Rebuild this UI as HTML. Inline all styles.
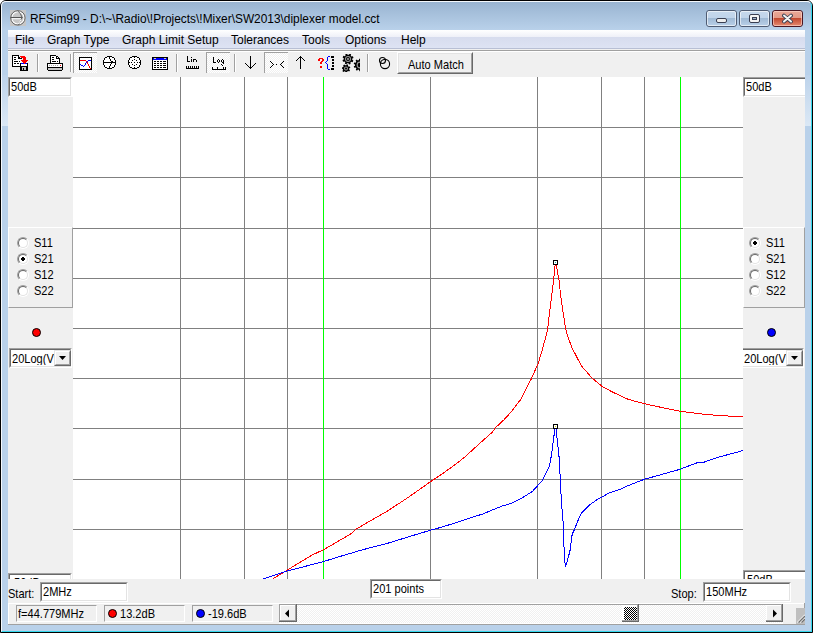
<!DOCTYPE html>
<html><head><meta charset="utf-8">
<style>
*{margin:0;padding:0;box-sizing:border-box}
html,body{width:813px;height:633px;overflow:hidden;background:#fff;font-family:"Liberation Sans",sans-serif;font-size:12px;color:#000}
.a{position:absolute}
.t{position:absolute;white-space:nowrap;line-height:1}
.ms{font-size:13px;transform:scaleX(0.85);transform-origin:0 0}
.sunk{position:absolute;background:#fff;border-top:1px solid #a0a0a0;border-left:1px solid #a0a0a0;border-right:1px solid #fff;border-bottom:1px solid #fff}
.sunk>i{position:absolute;left:0;top:0;right:0;bottom:0;border-top:1px solid #696969;border-left:1px solid #696969;border-right:1px solid #e3e3e3;border-bottom:1px solid #e3e3e3}
</style></head><body>
<!-- frame -->
<div class="a" style="left:0;top:0;width:813px;height:633px;border:1px solid #000;border-radius:6px 6px 0 0;background:#b9d1ea"></div>
<div class="a" style="left:1px;top:1px;width:811px;height:631px;border-top:1px solid #f4f8fc;border-left:1px solid #f4f8fc;border-right:1px solid #35d8ee;border-bottom:1px solid #35d8ee;border-radius:5px 5px 0 0;background:linear-gradient(#99b4d1 0px,#b9d1ea 28px,#b9d1ea 100%)"></div>
<!-- title icon -->
<svg class="a" style="left:10px;top:10px" width="16" height="16" viewBox="10 10 16 16">
<rect x="10" y="10" width="16" height="16" fill="#c6c6c6"/>
<circle cx="17.9" cy="17.9" r="6.2" fill="none" stroke="#fff" stroke-width="1.2"/>
<circle cx="17.9" cy="17.9" r="7.2" fill="none" stroke="#646464" stroke-width="1"/>
<rect x="10.5" y="17" width="12" height="1.1" fill="#555"/>
<rect x="12" y="18.2" width="9" height="1" fill="#fff"/>
<path d="M17.5 10.8 Q21 13 22 17.5" fill="none" stroke="#646464" stroke-width="1"/>
<path d="M22 17.5 Q20 22 18 25" fill="none" stroke="#646464" stroke-width="1"/>
<path d="M21 19.5 Q19.5 22.5 18.3 24" fill="none" stroke="#fff" stroke-width="1"/>
</svg>
<div class="t" style="left:30px;top:13px;font-size:12px;color:#000;transform:scaleX(0.99);transform-origin:0 0">RFSim99 - D:\~\Radio\!Projects\!Mixer\SW2013\diplexer model.cct</div>
<!-- caption buttons -->
<div class="a" style="left:706px;top:10px;width:31px;height:17px;border:1px solid #4f5c73;border-radius:3px;background:linear-gradient(#c6d8ec 0,#c0d4ea 7px,#9fb9d4 7px,#b9d0e8 15px)"><div class="a" style="left:0;top:0;right:0;bottom:0;border:1px solid rgba(255,255,255,.6);border-radius:2px"></div></div>
<div class="a" style="left:716px;top:18px;width:11px;height:5px;border:1px solid #3a3f52;border-radius:2px;background:#eee"></div>
<div class="a" style="left:739px;top:10px;width:31px;height:17px;border:1px solid #4f5c73;border-radius:3px;background:linear-gradient(#c6d8ec 0,#c0d4ea 7px,#9fb9d4 7px,#b9d0e8 15px)"><div class="a" style="left:0;top:0;right:0;bottom:0;border:1px solid rgba(255,255,255,.6);border-radius:2px"></div></div>
<div class="a" style="left:749px;top:14px;width:11px;height:9px;border:1px solid #3a3f52;border-radius:2px;background:#f4f4f4"></div>
<div class="a" style="left:752px;top:17px;width:5px;height:3px;border:1px solid #3a3f52;background:#9fb5cc"></div>
<div class="a" style="left:772px;top:10px;width:31px;height:17px;border:1px solid #4a1622;border-radius:3px;background:linear-gradient(#eaa898 0,#e39a88 7px,#c0452c 7px,#e58a70 15px)"><div class="a" style="left:0;top:0;right:0;bottom:0;border:1px solid rgba(255,220,210,.6);border-radius:2px"></div></div>
<svg class="a" style="left:781px;top:13px" width="13" height="11" viewBox="0 0 13 11"><path d="M3 2.6 L10 8.6 M10 2.6 L3 8.6" stroke="#3a3f52" stroke-width="3.8" stroke-linecap="round"/><path d="M3 2.6 L10 8.6 M10 2.6 L3 8.6" stroke="#f4f4f4" stroke-width="2" stroke-linecap="round"/></svg>

<!-- client area -->
<div class="a" style="left:8px;top:30px;width:797px;height:595px;background:#f0f0f0"></div>
<!-- menu -->
<div class="a" style="left:8px;top:30px;width:797px;height:18px;background:linear-gradient(#fff 0,#eef0f8 7px,#d7dcee 7px,#dde3f3 18px)"></div>
<div class="a" style="left:8px;top:48px;width:797px;height:1px;background:#b8bfd4"></div>
<div class="a" style="left:8px;top:49px;width:797px;height:1px;background:#f0f0f0"></div>
<div class="a" style="left:8px;top:50px;width:797px;height:1px;background:#a0a0a0"></div>
<div class="a" style="left:8px;top:51px;width:797px;height:1px;background:#fff"></div>
<div class="t" style="left:15px;top:34px">File</div>
<div class="t" style="left:47px;top:34px">Graph Type</div>
<div class="t" style="left:122px;top:34px">Graph Limit Setup</div>
<div class="t" style="left:231px;top:34px">Tolerances</div>
<div class="t" style="left:302px;top:34px">Tools</div>
<div class="t" style="left:345px;top:34px">Options</div>
<div class="t" style="left:401px;top:34px">Help</div>

<!-- toolbar -->
<div class="a" style="left:37px;top:54px;width:1px;height:18px;background:#a0a0a0"></div><div class="a" style="left:38px;top:54px;width:1px;height:18px;background:#fff"></div>
<div class="a" style="left:70px;top:54px;width:1px;height:18px;background:#a0a0a0"></div><div class="a" style="left:71px;top:54px;width:1px;height:18px;background:#fff"></div>
<div class="a" style="left:176px;top:54px;width:1px;height:18px;background:#a0a0a0"></div><div class="a" style="left:177px;top:54px;width:1px;height:18px;background:#fff"></div>
<div class="a" style="left:234px;top:54px;width:1px;height:18px;background:#a0a0a0"></div><div class="a" style="left:235px;top:54px;width:1px;height:18px;background:#fff"></div>
<div class="a" style="left:367px;top:54px;width:1px;height:18px;background:#a0a0a0"></div><div class="a" style="left:368px;top:54px;width:1px;height:18px;background:#fff"></div>
<svg class="a" style="left:0;top:0" width="813" height="80">
<defs><pattern id="dith" width="2" height="2" patternUnits="userSpaceOnUse"><rect width="2" height="2" fill="#f0f0f0"/><rect width="1" height="1" fill="#fff"/><rect x="1" y="1" width="1" height="1" fill="#fff"/></pattern></defs>
<g shape-rendering="crispEdges">
<!-- pressed buttons -->
<rect x="73" y="52" width="24" height="21" fill="url(#dith)"/><rect x="73" y="52" width="24" height="1" fill="#a0a0a0"/><rect x="73" y="52" width="1" height="21" fill="#a0a0a0"/>
<rect x="206" y="52" width="24" height="21" fill="url(#dith)"/><rect x="206" y="52" width="24" height="1" fill="#a0a0a0"/><rect x="206" y="52" width="1" height="21" fill="#a0a0a0"/>
<rect x="264" y="52" width="24" height="21" fill="url(#dith)"/><rect x="264" y="52" width="24" height="1" fill="#a0a0a0"/><rect x="264" y="52" width="1" height="21" fill="#a0a0a0"/>
<!-- save icon -->
<rect x="12" y="55" width="7" height="1" fill="#000"/><rect x="12" y="55" width="1" height="12" fill="#000"/><rect x="12" y="66" width="9" height="1" fill="#000"/><rect x="13" y="56" width="8" height="10" fill="#fff"/><rect x="19" y="56" width="2" height="2" fill="#f0f0f0"/><rect x="18" y="56" width="1" height="1" fill="#000"/><rect x="19" y="57" width="1" height="1" fill="#000"/><rect x="20" y="58" width="1" height="1" fill="#000"/><rect x="18" y="57" width="1" height="2" fill="#000"/><rect x="18" y="58" width="2" height="1" fill="#000"/><rect x="14" y="57" width="2" height="1" fill="#000"/><rect x="14" y="59" width="2" height="1" fill="#000"/><rect x="14" y="61" width="4" height="1" fill="#000"/><rect x="19" y="61" width="1" height="1" fill="#000"/><rect x="14" y="63" width="2" height="1" fill="#000"/><rect x="17" y="63" width="2" height="1" fill="#000"/><rect x="21" y="58" width="1" height="1" fill="#000"/><rect x="20" y="56" width="5" height="1" fill="#f00"/><rect x="21" y="57" width="5" height="1" fill="#f00"/><rect x="23" y="58" width="3" height="1" fill="#f00"/><rect x="23" y="59" width="3" height="1" fill="#f00"/><rect x="21" y="60" width="7" height="1" fill="#f00"/><rect x="22" y="61" width="5" height="1" fill="#f00"/><rect x="23" y="62" width="3" height="1" fill="#f00"/><rect x="24" y="63" width="1" height="1" fill="#f00"/><rect x="20" y="63" width="8" height="8" fill="#000"/><rect x="21" y="63" width="3" height="1" fill="#00f"/><rect x="25" y="63" width="2" height="1" fill="#00f"/><rect x="24" y="63" width="1" height="1" fill="#f00"/><rect x="21" y="64" width="6" height="2" fill="#fff"/><rect x="22" y="67" width="4" height="3" fill="#c0c0c0"/><rect x="23" y="68" width="1" height="2" fill="#000"/><rect x="27" y="70" width="1" height="1" fill="#000"/>
<!-- printer -->
<rect x="50" y="55" width="10" height="9" fill="#000"/><rect x="51" y="56" width="8" height="8" fill="#fff"/>
<rect x="56" y="55" width="4" height="3" fill="#f0f0f0"/><rect x="56" y="56" width="1" height="2" fill="#000"/><rect x="56" y="58" width="3" height="1" fill="#000"/><rect x="57" y="56" width="1" height="1" fill="#000"/><rect x="58" y="57" width="1" height="1" fill="#000"/><rect x="59" y="58" width="1" height="6" fill="#000"/>
<rect x="52" y="57" width="2" height="1" fill="#000"/><rect x="52" y="59" width="2" height="1" fill="#000"/><rect x="52" y="61" width="4" height="1" fill="#000"/><rect x="57" y="61" width="1" height="1" fill="#000"/>
<rect x="47" y="63" width="16" height="8" fill="#000"/><rect x="48" y="64" width="14" height="3" fill="#fff"/>
<rect x="49" y="65" width="1" height="1" fill="#aaa"/><rect x="51" y="65" width="1" height="1" fill="#aaa"/><rect x="53" y="65" width="1" height="1" fill="#aaa"/><rect x="55" y="65" width="1" height="1" fill="#aaa"/><rect x="57" y="65" width="1" height="1" fill="#aaa"/><rect x="60" y="65" width="1" height="1" fill="#f00"/>
<rect x="48" y="68" width="14" height="2" fill="#c8c8c8"/><rect x="47" y="70" width="1" height="1" fill="#f0f0f0"/><rect x="62" y="70" width="1" height="1" fill="#f0f0f0"/>
<!-- graph icon -->
<rect x="79" y="57" width="13" height="13" fill="#000"/><rect x="80" y="58" width="11" height="11" fill="#fff"/>
</g>
<g shape-rendering="crispEdges"><rect x="80" y="60" width="1" height="1" fill="#f00"/><rect x="81" y="60" width="1" height="1" fill="#f00"/><rect x="82" y="60" width="1" height="1" fill="#f00"/><rect x="83" y="60" width="1" height="1" fill="#f00"/><rect x="84" y="60" width="1" height="1" fill="#f00"/><rect x="85" y="60" width="1" height="1" fill="#f00"/><rect x="86" y="61" width="1" height="1" fill="#f00"/><rect x="87" y="62" width="1" height="1" fill="#f00"/><rect x="87" y="63" width="1" height="1" fill="#f00"/><rect x="88" y="64" width="1" height="1" fill="#f00"/><rect x="88" y="65" width="1" height="1" fill="#f00"/><rect x="89" y="66" width="1" height="1" fill="#f00"/><rect x="89" y="67" width="1" height="1" fill="#f00"/><rect x="90" y="68" width="1" height="1" fill="#f00"/><rect x="80" y="64" width="1" height="1" fill="#00f"/><rect x="81" y="65" width="1" height="1" fill="#00f"/><rect x="82" y="65" width="1" height="1" fill="#00f"/><rect x="83" y="66" width="1" height="1" fill="#00f"/><rect x="84" y="65" width="1" height="1" fill="#00f"/><rect x="85" y="64" width="1" height="1" fill="#00f"/><rect x="85" y="63" width="1" height="1" fill="#00f"/><rect x="86" y="62" width="1" height="1" fill="#00f"/><rect x="87" y="61" width="1" height="1" fill="#00f"/><rect x="88" y="60" width="1" height="1" fill="#00f"/><rect x="89" y="60" width="1" height="1" fill="#00f"/><rect x="90" y="60" width="1" height="1" fill="#00f"/></g>
<!-- smith -->
<g shape-rendering="crispEdges"><rect x="107" y="57" width="5" height="1" fill="#fff"/><rect x="105" y="58" width="9" height="1" fill="#fff"/><rect x="105" y="59" width="9" height="1" fill="#fff"/><rect x="104" y="60" width="11" height="1" fill="#fff"/><rect x="104" y="61" width="11" height="1" fill="#fff"/><rect x="104" y="62" width="11" height="1" fill="#fff"/><rect x="104" y="63" width="11" height="1" fill="#fff"/><rect x="104" y="64" width="11" height="1" fill="#fff"/><rect x="105" y="65" width="9" height="1" fill="#fff"/><rect x="105" y="66" width="9" height="1" fill="#fff"/><rect x="107" y="67" width="5" height="1" fill="#fff"/><rect x="107" y="56" width="5" height="1" fill="#000"/><rect x="105" y="57" width="2" height="1" fill="#000"/><rect x="112" y="57" width="2" height="1" fill="#000"/><rect x="104" y="58" width="1" height="1" fill="#000"/><rect x="114" y="58" width="1" height="1" fill="#000"/><rect x="104" y="59" width="1" height="1" fill="#000"/><rect x="114" y="59" width="1" height="1" fill="#000"/><rect x="103" y="60" width="1" height="1" fill="#000"/><rect x="115" y="60" width="1" height="1" fill="#000"/><rect x="103" y="61" width="1" height="1" fill="#000"/><rect x="115" y="61" width="1" height="1" fill="#000"/><rect x="103" y="62" width="1" height="1" fill="#000"/><rect x="115" y="62" width="1" height="1" fill="#000"/><rect x="103" y="63" width="1" height="1" fill="#000"/><rect x="115" y="63" width="1" height="1" fill="#000"/><rect x="103" y="64" width="1" height="1" fill="#000"/><rect x="115" y="64" width="1" height="1" fill="#000"/><rect x="104" y="65" width="1" height="1" fill="#000"/><rect x="114" y="65" width="1" height="1" fill="#000"/><rect x="104" y="66" width="1" height="1" fill="#000"/><rect x="114" y="66" width="1" height="1" fill="#000"/><rect x="105" y="67" width="2" height="1" fill="#000"/><rect x="112" y="67" width="2" height="1" fill="#000"/><rect x="107" y="68" width="5" height="1" fill="#000"/><rect x="104" y="62" width="11" height="1" fill="#000"/><rect x="109" y="57" width="1" height="1" fill="#000"/><rect x="109" y="58" width="1" height="1" fill="#000"/><rect x="110" y="59" width="1" height="1" fill="#000"/><rect x="110" y="60" width="1" height="1" fill="#000"/><rect x="111" y="61" width="1" height="1" fill="#000"/><rect x="111" y="63" width="1" height="1" fill="#000"/><rect x="110" y="64" width="1" height="1" fill="#000"/><rect x="110" y="65" width="1" height="1" fill="#000"/><rect x="109" y="66" width="1" height="1" fill="#000"/><rect x="109" y="67" width="1" height="1" fill="#000"/><rect x="111" y="61" width="2" height="2" fill="#000"/></g>
<!-- polar -->
<g shape-rendering="crispEdges" fill="#000"><rect x="132" y="57" width="5" height="1" fill="#fff"/><rect x="130" y="58" width="9" height="1" fill="#fff"/><rect x="130" y="59" width="9" height="1" fill="#fff"/><rect x="129" y="60" width="11" height="1" fill="#fff"/><rect x="129" y="61" width="11" height="1" fill="#fff"/><rect x="129" y="62" width="11" height="1" fill="#fff"/><rect x="129" y="63" width="11" height="1" fill="#fff"/><rect x="129" y="64" width="11" height="1" fill="#fff"/><rect x="130" y="65" width="9" height="1" fill="#fff"/><rect x="130" y="66" width="9" height="1" fill="#fff"/><rect x="132" y="67" width="5" height="1" fill="#fff"/><rect x="132" y="56" width="5" height="1" fill="#000"/><rect x="130" y="57" width="2" height="1" fill="#000"/><rect x="137" y="57" width="2" height="1" fill="#000"/><rect x="129" y="58" width="1" height="1" fill="#000"/><rect x="139" y="58" width="1" height="1" fill="#000"/><rect x="129" y="59" width="1" height="1" fill="#000"/><rect x="139" y="59" width="1" height="1" fill="#000"/><rect x="128" y="60" width="1" height="1" fill="#000"/><rect x="140" y="60" width="1" height="1" fill="#000"/><rect x="128" y="61" width="1" height="1" fill="#000"/><rect x="140" y="61" width="1" height="1" fill="#000"/><rect x="128" y="62" width="1" height="1" fill="#000"/><rect x="140" y="62" width="1" height="1" fill="#000"/><rect x="128" y="63" width="1" height="1" fill="#000"/><rect x="140" y="63" width="1" height="1" fill="#000"/><rect x="128" y="64" width="1" height="1" fill="#000"/><rect x="140" y="64" width="1" height="1" fill="#000"/><rect x="129" y="65" width="1" height="1" fill="#000"/><rect x="139" y="65" width="1" height="1" fill="#000"/><rect x="129" y="66" width="1" height="1" fill="#000"/><rect x="139" y="66" width="1" height="1" fill="#000"/><rect x="130" y="67" width="2" height="1" fill="#000"/><rect x="137" y="67" width="2" height="1" fill="#000"/><rect x="132" y="68" width="5" height="1" fill="#000"/><rect x="134" y="57" width="1" height="1" fill="#000"/><rect x="134" y="67" width="1" height="1" fill="#000"/><rect x="129" y="62" width="1" height="1" fill="#000"/><rect x="139" y="62" width="1" height="1" fill="#000"/><rect x="134" y="59" width="1" height="1" fill="#000"/><rect x="132" y="60" width="1" height="1" fill="#000"/><rect x="136" y="60" width="1" height="1" fill="#000"/><rect x="131" y="62" width="1" height="1" fill="#000"/><rect x="134" y="62" width="1" height="1" fill="#000"/><rect x="137" y="62" width="1" height="1" fill="#000"/><rect x="132" y="64" width="1" height="1" fill="#000"/><rect x="136" y="64" width="1" height="1" fill="#000"/><rect x="134" y="65" width="1" height="1" fill="#000"/>
<!-- table -->
<rect x="152" y="57" width="16" height="13"/><rect x="153" y="58" width="14" height="11" fill="#fff"/><rect x="153" y="58" width="14" height="2" fill="#00f"/><rect x="154" y="58" width="2" height="1" fill="#d8d8a0"/><rect x="164" y="58" width="2" height="1" fill="#d8d8a0"/>
<rect x="154" y="61" width="2" height="1"/><rect x="157" y="61" width="2" height="1"/><rect x="160" y="61" width="2" height="1"/><rect x="163" y="61" width="3" height="1"/>
<rect x="154" y="63" width="2" height="1"/><rect x="157" y="63" width="2" height="1"/><rect x="160" y="63" width="2" height="1"/><rect x="163" y="63" width="3" height="1"/>
<rect x="154" y="65" width="2" height="1"/><rect x="157" y="65" width="2" height="1"/><rect x="160" y="65" width="2" height="1"/><rect x="163" y="65" width="3" height="1"/>
<rect x="154" y="67" width="2" height="1"/><rect x="157" y="67" width="2" height="1"/><rect x="160" y="67" width="2" height="1"/><rect x="163" y="67" width="3" height="1"/>
<!-- Lin -->
<rect x="187" y="56" width="1" height="6"/><rect x="187" y="61" width="3" height="1"/><rect x="191" y="57" width="1" height="1"/><rect x="191" y="59" width="1" height="3"/><rect x="193" y="59" width="1" height="3"/><rect x="194" y="59" width="2" height="1"/><rect x="196" y="60" width="1" height="2"/>
<rect x="186" y="68" width="13" height="1"/><rect x="186" y="66" width="1" height="2"/><rect x="188" y="66" width="1" height="2"/><rect x="190" y="66" width="1" height="2"/><rect x="192" y="66" width="1" height="2"/><rect x="194" y="66" width="1" height="2"/><rect x="196" y="66" width="1" height="2"/><rect x="198" y="66" width="1" height="2"/>
<!-- Log -->
<rect x="213" y="57" width="1" height="6"/><rect x="213" y="62" width="3" height="1"/>
<rect x="218" y="59" width="1" height="1"/><rect x="217" y="60" width="1" height="2"/><rect x="219" y="60" width="1" height="2"/><rect x="218" y="62" width="1" height="1"/>
<rect x="222" y="59" width="1" height="1"/><rect x="221" y="60" width="1" height="2"/><rect x="223" y="60" width="1" height="4"/><rect x="222" y="62" width="1" height="1"/><rect x="221" y="64" width="1" height="1"/><rect x="222" y="65" width="1" height="1"/>
<rect x="212" y="69" width="14" height="1"/><rect x="212" y="67" width="1" height="2"/><rect x="217" y="67" width="1" height="2"/><rect x="223" y="67" width="1" height="2"/><rect x="225" y="67" width="1" height="2"/>
</g>
<!-- arrows -->
<g fill="none" stroke="#000" stroke-width="1" shape-rendering="crispEdges">
<path d="M250.5 56v12.5M245.5 63.5l5 5l5 -5"/>
<path d="M300.5 68.5v-12.5M295.5 61.5l5 -5l5 5"/>

</g>
<rect x="276" y="64" width="1" height="1" fill="#000"/>
<g fill="#000" shape-rendering="crispEdges"><rect x="270" y="61" width="1" height="1"/><rect x="271" y="62" width="1" height="1"/><rect x="272" y="63" width="1" height="1"/><rect x="273" y="64" width="1" height="1"/><rect x="272" y="65" width="1" height="1"/><rect x="271" y="66" width="1" height="1"/><rect x="270" y="67" width="1" height="1"/><rect x="283" y="61" width="1" height="1"/><rect x="282" y="62" width="1" height="1"/><rect x="281" y="63" width="1" height="1"/><rect x="280" y="64" width="1" height="1"/><rect x="281" y="65" width="1" height="1"/><rect x="282" y="66" width="1" height="1"/><rect x="283" y="67" width="1" height="1"/></g>

<!-- ?{ -->
<g shape-rendering="crispEdges">
<g fill="#f00"><rect x="319" y="58" width="4" height="1"/><rect x="318" y="59" width="2" height="2"/><rect x="322" y="59" width="2" height="2"/><rect x="321" y="61" width="2" height="1"/><rect x="320" y="62" width="2" height="2"/><rect x="320" y="66" width="2" height="2"/></g>
<g fill="#00f"><rect x="328" y="56" width="2" height="1"/><rect x="327" y="57" width="1" height="4"/><rect x="326" y="61" width="1" height="1"/><rect x="325" y="62" width="1" height="1"/><rect x="326" y="63" width="1" height="1"/><rect x="327" y="64" width="1" height="5"/><rect x="328" y="69" width="2" height="1"/></g>
<g fill="#000"><rect x="331" y="56" width="3" height="2"/><rect x="332" y="59" width="2" height="2"/><rect x="332" y="62" width="2" height="2"/><rect x="332" y="65" width="2" height="2"/><rect x="331" y="68" width="3" height="2"/></g>
</g>
<!-- gears -->
<clipPath id="gclip"><rect x="342" y="54" width="18" height="18"/></clipPath>
<g clip-path="url(#gclip)">
<path d="M352.21 59.85 L353.36 60.62 L352.64 62.13 L351.32 61.73 L350.38 62.58 L350.64 63.94 L349.07 64.50 L348.42 63.28 L347.15 63.21 L346.38 64.36 L344.87 63.64 L345.27 62.32 L344.42 61.38 L343.06 61.64 L342.50 60.07 L343.72 59.42 L343.79 58.15 L342.64 57.38 L343.36 55.87 L344.68 56.27 L345.62 55.42 L345.36 54.06 L346.93 53.50 L347.58 54.72 L348.85 54.79 L349.62 53.64 L351.13 54.36 L350.73 55.68 L351.58 56.62 L352.94 56.36 L353.50 57.93 L352.28 58.58Z" fill="#000"/><circle cx="348" cy="59" r="3" fill="#999"/><circle cx="348" cy="59" r="2" fill="#000"/><circle cx="348" cy="59" r="1" fill="#aaa"/>
<path d="M364.98 65.50 L366.30 66.12 L365.86 67.58 L364.41 67.35 L363.73 68.33 L364.44 69.61 L363.23 70.53 L362.19 69.50 L361.06 69.89 L360.89 71.34 L359.36 71.37 L359.13 69.92 L357.99 69.58 L356.99 70.65 L355.74 69.78 L356.40 68.47 L355.68 67.52 L354.25 67.80 L353.75 66.36 L355.05 65.69 L355.02 64.50 L353.70 63.88 L354.14 62.42 L355.59 62.65 L356.27 61.67 L355.56 60.39 L356.77 59.47 L357.81 60.50 L358.94 60.11 L359.11 58.66 L360.64 58.63 L360.87 60.08 L362.01 60.42 L363.01 59.35 L364.26 60.22 L363.60 61.53 L364.32 62.48 L365.75 62.20 L366.25 63.64 L364.95 64.31Z" fill="#000"/><circle cx="360" cy="65" r="3.4" fill="#999"/><circle cx="360" cy="65" r="2.3" fill="#000"/>
<path d="M349.15 69.48 L350.04 70.24 L349.22 71.50 L348.16 70.99 L347.20 71.57 L347.15 72.75 L345.67 72.89 L345.40 71.74 L344.35 71.36 L343.40 72.05 L342.36 70.98 L343.09 70.05 L342.74 68.99 L341.60 68.68 L341.80 67.20 L342.97 67.19 L343.58 66.25 L343.12 65.18 L344.40 64.40 L345.13 65.32 L346.25 65.21 L346.80 64.17 L348.20 64.69 L347.95 65.84 L348.73 66.64 L349.88 66.43 L350.35 67.85 L349.30 68.36Z" fill="#000"/><circle cx="346" cy="68.5" r="2" fill="#999"/><circle cx="346" cy="68.5" r="1" fill="#000"/>
</g>
<!-- circle icon -->
<circle cx="382.5" cy="60.5" r="3" fill="none" stroke="#000" stroke-width="1.1"/>
<circle cx="385" cy="64" r="4.6" fill="none" stroke="#000" stroke-width="1.1"/>
</svg>
<!-- Auto Match button -->
<div class="a" style="left:397px;top:52px;width:76px;height:22px;background:#f0f0f0;border-top:1px solid #fff;border-left:1px solid #fff;border-right:1px solid #696969;border-bottom:1px solid #696969"><div class="a" style="left:0;top:0;right:0;bottom:0;border-right:1px solid #a0a0a0;border-bottom:1px solid #a0a0a0;border-top:1px solid #e3e3e3;border-left:1px solid #e3e3e3"></div></div>
<div class="t ms" style="left:408px;top:58px">Auto Match</div>


<div class="a" style="left:8px;top:77px;width:65px;height:502px;background:#f0f0f0"></div>
<div class="a" style="left:8px;top:227px;width:65px;height:81px;border-top:1px solid #fff;border-left:1px solid #fff;border-right:1px solid #a0a0a0;border-bottom:1px solid #a0a0a0"></div>
<div class="a" style="left:17px;top:237px;width:12px;height:12px;border-radius:50%;border:1px solid;border-color:#a0a0a0 #fff #fff #a0a0a0;transform:rotate(0deg)"><div class="a" style="left:0;top:0;width:10px;height:10px;border-radius:50%;border:1px solid;border-color:#696969 #e3e3e3 #e3e3e3 #696969;background:#fff"></div></div>
<div class="t ms" style="left:34px;top:236px">S11</div>
<div class="a" style="left:17px;top:253px;width:12px;height:12px;border-radius:50%;border:1px solid;border-color:#a0a0a0 #fff #fff #a0a0a0;transform:rotate(0deg)"><div class="a" style="left:0;top:0;width:10px;height:10px;border-radius:50%;border:1px solid;border-color:#696969 #e3e3e3 #e3e3e3 #696969;background:#fff"></div></div><div class="a" style="left:21px;top:258px;width:4px;height:2px;background:#000"></div><div class="a" style="left:22px;top:257px;width:2px;height:4px;background:#000"></div>
<div class="t ms" style="left:34px;top:252px">S21</div>
<div class="a" style="left:17px;top:269px;width:12px;height:12px;border-radius:50%;border:1px solid;border-color:#a0a0a0 #fff #fff #a0a0a0;transform:rotate(0deg)"><div class="a" style="left:0;top:0;width:10px;height:10px;border-radius:50%;border:1px solid;border-color:#696969 #e3e3e3 #e3e3e3 #696969;background:#fff"></div></div>
<div class="t ms" style="left:34px;top:268px">S12</div>
<div class="a" style="left:17px;top:285px;width:12px;height:12px;border-radius:50%;border:1px solid;border-color:#a0a0a0 #fff #fff #a0a0a0;transform:rotate(0deg)"><div class="a" style="left:0;top:0;width:10px;height:10px;border-radius:50%;border:1px solid;border-color:#696969 #e3e3e3 #e3e3e3 #696969;background:#fff"></div></div>
<div class="t ms" style="left:34px;top:284px">S22</div>
<div class="a" style="left:32px;top:328px;width:9px;height:9px;border-radius:50%;background:#f00;border:1px solid #000"></div>
<div class="a" style="left:743px;top:77px;width:62px;height:502px;background:#f0f0f0"></div>
<div class="a" style="left:743px;top:227px;width:62px;height:81px;border-top:1px solid #fff;border-left:1px solid #fff;border-right:1px solid #a0a0a0;border-bottom:1px solid #a0a0a0"></div>
<div class="a" style="left:749px;top:237px;width:12px;height:12px;border-radius:50%;border:1px solid;border-color:#a0a0a0 #fff #fff #a0a0a0;transform:rotate(0deg)"><div class="a" style="left:0;top:0;width:10px;height:10px;border-radius:50%;border:1px solid;border-color:#696969 #e3e3e3 #e3e3e3 #696969;background:#fff"></div></div><div class="a" style="left:753px;top:242px;width:4px;height:2px;background:#000"></div><div class="a" style="left:754px;top:241px;width:2px;height:4px;background:#000"></div>
<div class="t ms" style="left:766px;top:236px">S11</div>
<div class="a" style="left:749px;top:253px;width:12px;height:12px;border-radius:50%;border:1px solid;border-color:#a0a0a0 #fff #fff #a0a0a0;transform:rotate(0deg)"><div class="a" style="left:0;top:0;width:10px;height:10px;border-radius:50%;border:1px solid;border-color:#696969 #e3e3e3 #e3e3e3 #696969;background:#fff"></div></div>
<div class="t ms" style="left:766px;top:252px">S21</div>
<div class="a" style="left:749px;top:269px;width:12px;height:12px;border-radius:50%;border:1px solid;border-color:#a0a0a0 #fff #fff #a0a0a0;transform:rotate(0deg)"><div class="a" style="left:0;top:0;width:10px;height:10px;border-radius:50%;border:1px solid;border-color:#696969 #e3e3e3 #e3e3e3 #696969;background:#fff"></div></div>
<div class="t ms" style="left:766px;top:268px">S12</div>
<div class="a" style="left:749px;top:285px;width:12px;height:12px;border-radius:50%;border:1px solid;border-color:#a0a0a0 #fff #fff #a0a0a0;transform:rotate(0deg)"><div class="a" style="left:0;top:0;width:10px;height:10px;border-radius:50%;border:1px solid;border-color:#696969 #e3e3e3 #e3e3e3 #696969;background:#fff"></div></div>
<div class="t ms" style="left:766px;top:284px">S22</div>
<div class="a" style="left:767px;top:328px;width:9px;height:9px;border-radius:50%;background:#00f;border:1px solid #000"></div>
<div class="sunk" style="left:8px;top:77px;width:64px;height:20px"><i></i></div><div class="t ms" style="left:11px;top:80px">50dB</div>
<div class="sunk" style="left:743px;top:77px;width:64px;height:20px"><i></i></div><div class="t ms" style="left:746px;top:80px">50dB</div>
<div class="a" style="left:8px;top:573px;width:64px;height:6px;overflow:hidden"><div class="sunk" style="left:0;top:0;width:64px;height:20px"><i></i></div><div class="t ms" style="left:6px;top:3px">50dB</div></div>
<div class="a" style="left:743px;top:570px;width:62px;height:9px;overflow:hidden"><div class="sunk" style="left:0;top:0;width:64px;height:20px"><i></i></div><div class="t ms" style="left:4px;top:3px">50dB</div></div>
<div class="sunk" style="left:9px;top:348px;width:63px;height:20px"><i></i></div>
<div class="t ms" style="left:12px;top:352px;width:52px;overflow:hidden">20Log(V)</div>
<div class="a" style="left:54px;top:350px;width:17px;height:16px;background:#f0f0f0;border-top:1px solid #e3e3e3;border-left:1px solid #e3e3e3;border-right:1px solid #696969;border-bottom:1px solid #696969"><div class="a" style="left:0;top:0;right:0;bottom:0;border-top:1px solid #fff;border-left:1px solid #fff;border-right:1px solid #a0a0a0;border-bottom:1px solid #a0a0a0"></div></div>
<svg class="a" style="left:59px;top:356px" width="7" height="4"><path d="M0 0h7l-3.5 4z" fill="#000"/></svg>
<div class="sunk" style="left:741px;top:348px;width:63px;height:20px"><i></i></div>
<div class="t ms" style="left:744px;top:352px;width:52px;overflow:hidden">20Log(V)</div>
<div class="a" style="left:786px;top:350px;width:17px;height:16px;background:#f0f0f0;border-top:1px solid #e3e3e3;border-left:1px solid #e3e3e3;border-right:1px solid #696969;border-bottom:1px solid #696969"><div class="a" style="left:0;top:0;right:0;bottom:0;border-top:1px solid #fff;border-left:1px solid #fff;border-right:1px solid #a0a0a0;border-bottom:1px solid #a0a0a0"></div></div>
<svg class="a" style="left:791px;top:356px" width="7" height="4"><path d="M0 0h7l-3.5 4z" fill="#000"/></svg>


<svg class="a" style="left:0;top:0" width="813" height="633">
<defs><clipPath id="cc"><rect x="73" y="77" width="670" height="502"/></clipPath></defs>
<rect x="72" y="77" width="671" height="20" fill="#fff"/>
<rect x="73" y="77" width="670" height="502" fill="#fff"/>
<g shape-rendering="crispEdges">
<rect x="73" y="127" width="670" height="1" fill="#808080"/>
<rect x="73" y="177" width="670" height="1" fill="#808080"/>
<rect x="73" y="228" width="670" height="1" fill="#808080"/>
<rect x="73" y="278" width="670" height="1" fill="#808080"/>
<rect x="73" y="328" width="670" height="1" fill="#808080"/>
<rect x="73" y="378" width="670" height="1" fill="#808080"/>
<rect x="73" y="428" width="670" height="1" fill="#808080"/>
<rect x="73" y="479" width="670" height="1" fill="#808080"/>
<rect x="73" y="529" width="670" height="1" fill="#808080"/>
<rect x="180" y="77" width="1" height="502" fill="#808080"/>
<rect x="244" y="77" width="1" height="502" fill="#808080"/>
<rect x="287" y="77" width="1" height="502" fill="#808080"/>
<rect x="430" y="77" width="1" height="502" fill="#808080"/>
<rect x="537" y="77" width="1" height="502" fill="#808080"/>
<rect x="601" y="77" width="1" height="502" fill="#808080"/>
<rect x="644" y="77" width="1" height="502" fill="#808080"/>
<rect x="323" y="77" width="1" height="502" fill="#00ff00"/>
<rect x="680" y="77" width="1" height="502" fill="#00ff00"/>
</g>
<g clip-path="url(#cc)" fill="none" stroke-width="1" shape-rendering="crispEdges">
<polyline points="273.0,578.6 286.0,571.0 298.0,563.4 313.0,554.6 323.0,550.0 335.0,543.1 350.3,534.3 356.4,528.9 370.6,520.7 388.2,510.6 407.7,497.7 418.8,490.0 430.0,482.0 444.2,472.5 454.9,464.7 464.1,457.6 471.2,451.2 481.2,442.0 492.6,432.0 495.4,427.7 503.9,419.9 511.0,412.1 520.5,399.7 531.0,379.5 537.9,364.2 541.8,351.6 546.3,335.0 547.7,328.6 550.1,308.0 552.0,292.9 553.6,280.3 555.2,264.5 556.2,264.5 559.0,280.3 560.8,296.7 563.4,314.4 565.5,327.9 567.2,335.0 571.9,347.6 581.3,365.8 592.4,378.4 601.9,386.3 612.2,391.9 620.0,395.5 628.1,399.3 644.0,403.6 661.7,407.5 680.0,411.3 704.7,414.4 730.5,416.2 742.6,416.8" stroke="#f00"/>
<polyline points="262.9,578.9 287.0,571.0 323.0,561.8 335.0,557.9 363.2,549.6 388.2,543.1 411.2,536.0 430.0,530.4 440.0,527.6 456.4,522.6 462.3,520.5 483.6,513.7 490.6,510.6 502.0,506.1 510.8,503.6 520.0,499.2 532.1,491.7 542.5,480.4 549.5,466.3 551.6,454.0 553.6,438.6 555.0,428.0 556.0,428.0 557.2,439.6 559.3,459.1 560.8,490.8 562.2,511.7 563.3,523.8 563.7,541.8 564.7,558.9 565.4,567.4 567.0,561.7 569.9,551.3 572.2,534.1 574.4,529.7 578.0,520.5 581.5,513.1 589.8,504.8 597.6,499.3 601.0,497.6 609.7,492.7 620.0,489.3 627.2,486.0 644.0,479.4 680.0,469.3 685.8,467.0 698.7,462.2 703.9,462.2 720.2,456.7 742.6,450.7" stroke="#00f"/>
</g>
<g shape-rendering="crispEdges" fill="none" stroke="#000"><rect x="553.5" y="260.5" width="4" height="4"/><rect x="553.5" y="424.5" width="4" height="4"/></g>
<rect x="555" y="262" width="1" height="1" fill="#00c0c0"/><rect x="555" y="426" width="1" height="1" fill="#e0e000"/>
</svg>


<!-- bottom panel -->
<div class="t ms" style="left:8px;top:587px">Start:</div>
<div class="sunk" style="left:40px;top:582px;width:88px;height:20px"><i></i></div><div class="t ms" style="left:43px;top:585px">2MHz</div>
<div class="sunk" style="left:370px;top:579px;width:72px;height:20px"><i></i></div><div class="t ms" style="left:373px;top:582px">201 points</div>
<div class="t ms" style="left:671px;top:587px">Stop:</div>
<div class="sunk" style="left:703px;top:582px;width:88px;height:20px"><i></i></div><div class="t ms" style="left:706px;top:585px">150MHz</div>
<!-- status bar -->
<div class="a" style="left:8px;top:603px;width:797px;height:1px;background:#fff"></div>
<div class="a" style="left:8px;top:603px;width:1px;height:21px;background:#fff"></div>
<div class="a" style="left:8px;top:624px;width:797px;height:1px;background:#a0a0a0"></div>
<div class="a" style="left:16px;top:605px;width:81px;height:17px;border-top:1px solid #a0a0a0;border-left:1px solid #a0a0a0;border-right:1px solid #fff;border-bottom:1px solid #fff"></div>
<div class="a" style="left:104px;top:605px;width:81px;height:17px;border-top:1px solid #a0a0a0;border-left:1px solid #a0a0a0;border-right:1px solid #fff;border-bottom:1px solid #fff"></div>
<div class="a" style="left:192px;top:605px;width:81px;height:17px;border-top:1px solid #a0a0a0;border-left:1px solid #a0a0a0;border-right:1px solid #fff;border-bottom:1px solid #fff"></div>
<div class="t ms" style="left:18px;top:607px">f=44.779MHz</div>
<div class="a" style="left:108px;top:609px;width:9px;height:9px;border-radius:50%;background:#f00;border:1px solid #000"></div>
<div class="t ms" style="left:120px;top:607px">13.2dB</div>
<div class="a" style="left:196px;top:609px;width:9px;height:9px;border-radius:50%;background:#00f;border:1px solid #000"></div>
<div class="t ms" style="left:208px;top:607px">-19.6dB</div>
<!-- scrollbar -->
<svg class="a" style="left:0;top:0" width="813" height="633">
<defs><pattern id="dith2" width="2" height="2" patternUnits="userSpaceOnUse"><rect width="2" height="2" fill="#f0f0f0"/><rect width="1" height="1" fill="#fff"/><rect x="1" y="1" width="1" height="1" fill="#fff"/></pattern>
<pattern id="dith3" width="2" height="2" patternUnits="userSpaceOnUse"><rect width="2" height="2" fill="#fff"/><rect width="1" height="1" fill="#000"/><rect x="1" y="1" width="1" height="1" fill="#000"/></pattern></defs>
<g shape-rendering="crispEdges">
<rect x="279" y="604" width="504" height="1" fill="#a0a0a0"/>
<rect x="279" y="605" width="504" height="18" fill="url(#dith2)"/>
<rect x="279" y="623" width="504" height="1" fill="#fff"/>
<!-- left btn -->
<rect x="279" y="604" width="18" height="18" fill="#696969"/><rect x="279" y="604" width="17" height="17" fill="#a0a0a0"/><rect x="280" y="605" width="15" height="15" fill="#fff"/><rect x="281" y="606" width="14" height="14" fill="#f0f0f0"/>
<path d="M285 613.5L289 609.5V617.5Z" fill="#000" shape-rendering="auto"/>
<!-- right btn -->
<rect x="766" y="604" width="17" height="18" fill="#696969"/><rect x="766" y="604" width="16" height="17" fill="#a0a0a0"/><rect x="766" y="605" width="15" height="15" fill="#fff"/><rect x="767" y="606" width="14" height="14" fill="#f0f0f0"/>
<path d="M777 613.5L773 609.5V617.5Z" fill="#000" shape-rendering="auto"/>
<!-- thumb -->
<rect x="622" y="604" width="17" height="18" fill="#696969"/><rect x="622" y="604" width="16" height="17" fill="#a0a0a0"/><rect x="622" y="605" width="15" height="15" fill="#fff"/><rect x="624" y="607" width="13" height="13" fill="url(#dith3)"/>
<!-- grip -->
<rect x="796" y="608" width="9" height="16" fill="#bfbfbf"/>
<rect x="804" y="603" width="1" height="5" fill="#a0a0a0"/>
</g>
<path d="M797.5 622.5L805 615M800.5 622.5L805 618" stroke="#fff" stroke-width="1.2"/>
<path d="M798.5 622.5L805 616M801.5 622.5L805 619" stroke="#707070" stroke-width="1.2"/>
</svg>


<!-- frame overlays -->
<div class="a" style="left:805px;top:30px;width:6px;height:601px;background:#b9d1ea"></div>
<div class="a" style="left:2px;top:625px;width:809px;height:6px;background:#b9d1ea"></div>
<div class="a" style="left:2px;top:75px;width:6px;height:51px;background:linear-gradient(#bdd3eb,#dbe8f5)"></div>
<div class="a" style="left:805px;top:75px;width:6px;height:51px;background:linear-gradient(#bdd3eb,#dbe8f5)"></div>
</body></html>
